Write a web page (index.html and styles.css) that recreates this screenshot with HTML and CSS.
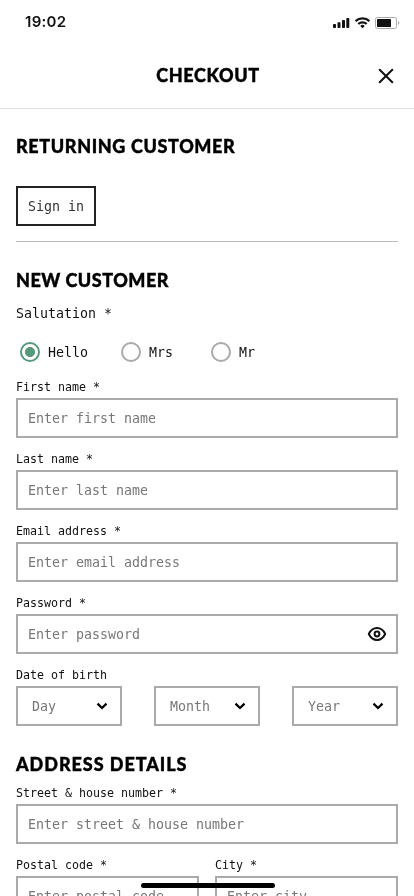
FILE: index.html
```html
<!DOCTYPE html>
<html lang="en">
<head>
<meta charset="utf-8">
<meta name="viewport" content="width=device-width, initial-scale=1">
<title>Checkout</title>
<link rel="stylesheet" href="styles.css">
</head>
<body>
<div class="screen">
  <div class="status">
    <span class="time">19:02</span>
    <svg class="status-icons" width="68" height="14" viewBox="0 0 68 14">
      <g fill="#111"><rect x="1" y="9" width="3" height="4" rx=".8"/><rect x="5.5" y="7.2" width="3" height="5.8" rx=".8"/><rect x="10" y="5" width="3" height="8" rx=".8"/><rect x="14.3" y="3" width="3" height="10" rx=".8"/></g>
      <g fill="none" stroke="#111" stroke-width="2.200"><path d="M23.6 6.1a10 10 0 0 1 13.8 0"/><path d="M26.3 9a6.1 6.1 0 0 1 8.4 0"/></g>
      <path fill="#111" d="M30.5 13.2l-2.2-2.3a3.2 3.2 0 0 1 4.4 0z"/>
      <rect x="43.5" y="2.5" width="21" height="11" rx="1.8" fill="#fff" stroke="#aaa"/>
      <rect x="45" y="4" width="14" height="8" rx=".6" fill="#111"/>
      <path d="M66 6v4q1.300-.5 1.300-2T66 6z" fill="#aaa"/>
    </svg>
  </div>
  <header class="header">
    <h1 class="heading checkout">CHECKOUT</h1>
    <svg class="close" width="16" height="16" viewBox="0 0 16 16"><path d="M1.700 1.700l12.600 12.600M14.300 1.700L1.700 14.300" stroke="#111" stroke-width="2" stroke-linecap="round"/></svg>
  </header>
  <main class="content">
    <section class="returning">
      <h2 class="heading returning-title">RETURNING CUSTOMER</h2>
      <button class="signin">Sign in</button>
    </section>
    <h2 class="heading new-title">NEW CUSTOMER</h2>
    <div class="salutation">Salutation *</div>
    <div class="radios">
      <label class="option"><span class="radio checked"></span><span class="text">Hello</span></label>
      <label class="option"><span class="radio"></span><span class="text">Mrs</span></label>
      <label class="option"><span class="radio"></span><span class="text">Mr</span></label>
    </div>
    <label class="field"><span class="label">First name *</span><input class="box" placeholder="Enter first name"></label>
    <label class="field"><span class="label">Last name *</span><input class="box" placeholder="Enter last name"></label>
    <label class="field"><span class="label">Email address *</span><input class="box" placeholder="Enter email address"></label>
    <div class="field"><span class="label">Password *</span>
      <div class="box with-icon"><span class="text">Enter password</span>
        <svg width="20" height="16" viewBox="0 0 20 16" fill="none" stroke="#111" stroke-width="2"><path d="M1.800 8C3.600 4.200 6.400 2 10 2s6.400 2.200 8.200 6c-1.800 3.800-4.600 6-8.200 6S3.600 11.800 1.800 8z" stroke-linejoin="round"/><circle cx="10" cy="8" r="2.400"/></svg>
      </div>
    </div>
    <div class="field"><span class="label">Date of birth</span>
      <div class="dates">
        <div class="box select"><span class="text">Day</span><svg class="chevron" viewBox="0 0 12 8"><path d="M1.500 1.700L6 6l4.500-4.300"/></svg></div>
        <div class="box select"><span class="text">Month</span><svg class="chevron" viewBox="0 0 12 8"><path d="M1.500 1.700L6 6l4.500-4.300"/></svg></div>
        <div class="box select"><span class="text">Year</span><svg class="chevron" viewBox="0 0 12 8"><path d="M1.500 1.700L6 6l4.500-4.300"/></svg></div>
      </div>
    </div>
    <h2 class="heading address-title">ADDRESS DETAILS</h2>
    <label class="field"><span class="label">Street &amp; house number *</span><input class="box" placeholder="Enter street &amp; house number"></label>
    <div class="pair">
      <label class="field"><span class="label">Postal code *</span><input class="box" placeholder="Enter postal code"></label>
      <label class="field"><span class="label">City *</span><input class="box" placeholder="Enter city"></label>
    </div>
  </main>
  <div class="home-bar"></div>
</div>
</body>
</html>
```
FILE: styles.css
```css
* { box-sizing: border-box; }
body { margin: 0; background: #fff; }
.screen {
  position: relative;
  width: 414px;
  height: 896px;
  overflow: hidden;
  color: #111;
  font: 13.29px/20px "DejaVu Sans Mono", monospace;
  will-change: transform;
}
.status {
  display: flex;
  justify-content: space-between;
  height: 44px;
  padding: 12px 14px 0 25px;
}
.time { font: 600 15px/20px Inter, sans-serif; letter-spacing: .3px; }
.status-icons { margin-top: 3px; }
.header {
  display: grid;
  grid-template-columns: 16px 1fr 16px;
  align-items: center;
  height: 65px;
  padding: 0 20px;
  border-bottom: 1px solid #ddd;
}
.heading {
  margin: 0;
  color: #000;
  font: 900 18px/24px Lato, sans-serif;
  white-space: nowrap;
  -webkit-text-stroke: .4px #000;
}
.checkout { grid-column: 2; text-align: center; letter-spacing: .6px; margin-top: -3px; padding-left: 2px; }
.close { grid-column: 3; }
.content { padding: 25px 16px 0; }
.returning { height: 108px; border-bottom: 1px solid #bbb; }
.returning-title { letter-spacing: .63px; }
.signin {
  display: block;
  width: 80px;
  height: 40px;
  margin-top: 28px;
  padding: 1px 0 0;
  border: 2px solid #222;
  background: #fff;
  color: #333;
  font: inherit;
}
.new-title { margin-top: 26px; letter-spacing: .5px; }
.salutation { margin-top: 12px; }
.radios {
  display: grid;
  grid-template-columns: 101px 90px 1fr;
  margin: 18px 0 14px;
  padding-left: 4px;
}
.option { display: flex; align-items: center; gap: 8px; height: 20px; }
.text { padding-top: 2px; }
.radio {
  width: 20px;
  height: 20px;
  border: 2px solid #aaa;
  border-radius: 50%;
}
.radio.checked {
  border-color: #559b7b;
  background: radial-gradient(circle, #559b7b 4.700px, #fff 5.300px);
}
.field { display: block; height: 72px; min-width: 0; }
.label {
  display: block;
  height: 22px;
  font-size: 11.63px;
  line-height: 22px;
}
.box {
  display: block;
  width: 100%;
  height: 40px;
  padding: 0 10px;
  border: 2px solid #aaa;
  border-radius: 0;
  background: #fff;
  color: #777;
  font: inherit;
}
.box::placeholder { color: #777; opacity: 1; }
.box.with-icon, .box.select { display: flex; align-items: center; justify-content: space-between; }
.box.with-icon { padding-right: 9px; }
.dates { display: grid; grid-template-columns: repeat(3, 106px); justify-content: space-between; }
.box.select { padding: 0 12px 0 14px; }
.chevron {
  width: 12px;
  height: 8px;
  fill: none;
  stroke: #000;
  stroke-width: 2.300;
}
.address-title { margin: 0 0 6px; padding-top: 16px; letter-spacing: .95px; }
.pair { display: grid; grid-template-columns: 1fr 1fr; gap: 16px; }
.home-bar {
  position: absolute;
  left: 141px;
  bottom: 8px;
  width: 134px;
  height: 5px;
  border-radius: 3px;
  background: #000;
}
```
